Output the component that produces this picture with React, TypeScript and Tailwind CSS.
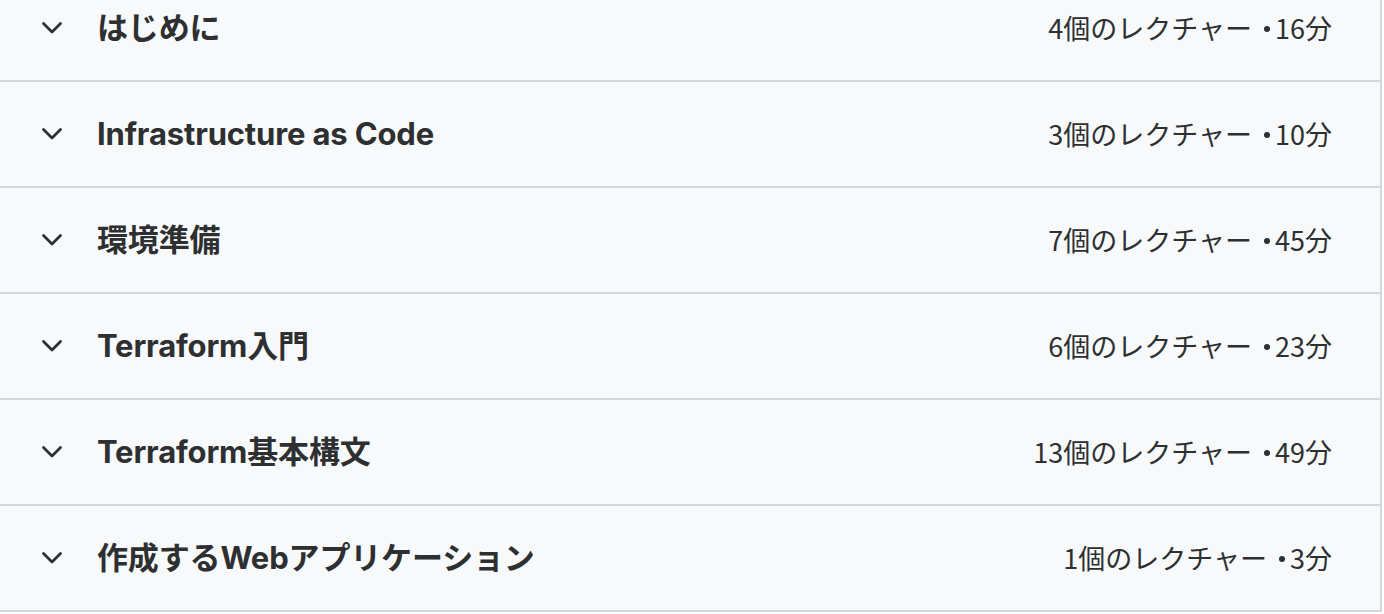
import React from "react";

const SECTIONS = [
  { title: "はじめに", lectures: 4, minutes: 16 },
  { title: "Infrastructure as Code", lectures: 3, minutes: 10 },
  { title: "環境準備", lectures: 7, minutes: 45 },
  { title: "Terraform入門", lectures: 6, minutes: 23 },
  { title: "Terraform基本構文", lectures: 13, minutes: 49 },
  { title: "作成するWebアプリケーション", lectures: 1, minutes: 3 },
];

function Chevron() {
  return (
    <svg width="22" height="14" viewBox="0 0 22 14" fill="none" className="shrink-0">
      <polyline
        points="2.5,2.5 11,11 19.5,2.5"
        stroke="#2d2f31"
        strokeWidth="2.8"
        strokeLinecap="round"
        strokeLinejoin="round"
      />
    </svg>
  );
}

export default function App() {
  return (
    <div className="w-[1384px] h-[614px] bg-white overflow-hidden font-['Inter','Noto_Sans_CJK_JP',sans-serif] text-[#2d2f31]">
      <div className="w-[1382px] -mt-[24px] bg-[#f7f9fa] border-r-2 border-[#d1d7dc]">
        {SECTIONS.map((s) => (
          <div
            key={s.title}
            className="h-[106px] border-b-2 border-[#d1d7dc] flex items-center pl-[41px] pr-[48px]"
          >
            <Chevron />
            <span className="ml-[34px] text-[31px] font-bold tracking-[-0.005em]">
              {s.title}
            </span>
            <span className="ml-auto text-[27px] font-['Noto_Sans_CJK_JP',sans-serif] flex items-center">
              <span>{s.lectures}個のレクチャー</span>
              <span className="ml-[12px] mr-[5px] mt-[2px] w-[6px] h-[6px] rounded-full bg-[#2d2f31]" />
              <span>{s.minutes}分</span>
            </span>
          </div>
        ))}
      </div>
    </div>
  );
}
